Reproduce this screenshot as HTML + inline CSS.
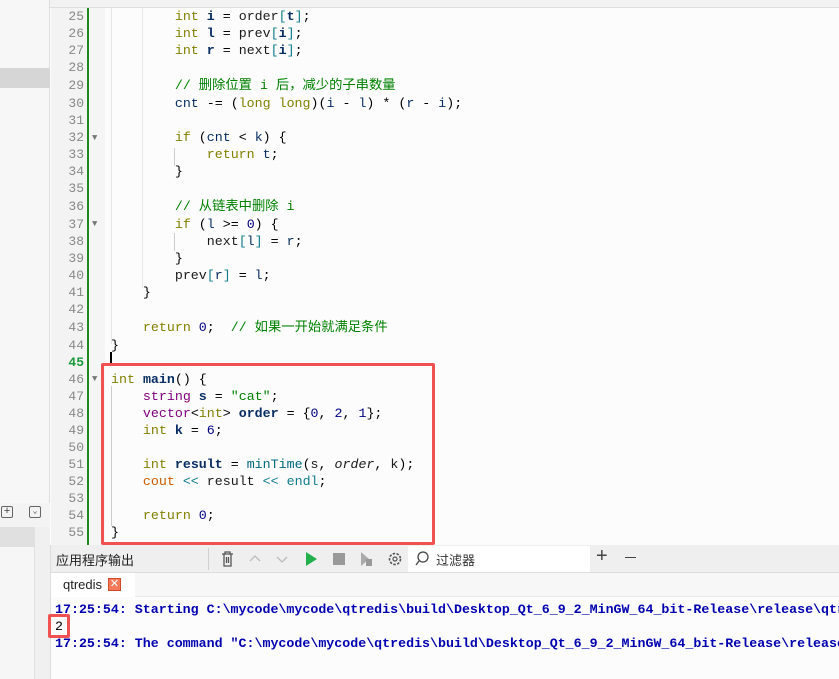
<!DOCTYPE html>
<html><head><meta charset="utf-8"><style>
*{margin:0;padding:0;box-sizing:border-box}
html,body{width:839px;height:679px;overflow:hidden}
body{background:#fcfcfc;position:relative;font-family:"Liberation Mono","Noto Sans CJK SC",monospace}
.abs{position:absolute}
#code{position:absolute;left:0;top:8px;width:839px;overflow:hidden}
.l{display:flex;height:17px;line-height:17px;font-size:13.3px;white-space:pre}
.l.c{height:19px;line-height:19px}
.n{width:84px;text-align:right;color:#888;padding-right:0;font-size:13px}
.t{position:absolute;left:111px}
.k{color:#808000}.v{color:#092e64;font-weight:bold}.p{color:#00677c}.num{color:#000080}.cm{color:#008000;font-family:"Liberation Mono","Noto Sans CJK SC",monospace}.s{color:#008000}.ty{color:#800080}.o{color:#ce5c00}.b{color:#1a1a1a}.br{color:#0f7c8c}
.ui{font-family:"Liberation Sans","Noto Sans CJK SC",sans-serif;font-size:13px;color:#222}
.out{left:55px;width:784px;overflow:hidden;font-size:13.3px;font-weight:bold;color:#0000b0;white-space:pre}
</style></head><body>
<div class="abs" style="left:0;top:0;width:839px;height:8px;background:#f2f2f2;border-bottom:1px solid #ddd"></div>
<div class="abs" style="left:0;top:0;width:50px;height:545px;background:#f7f7f7;border-right:1px solid #ddd"></div>
<div class="abs" style="left:0;top:68px;width:50px;height:20px;background:#d6d6d6"></div>
<div class="abs" style="left:51px;top:8px;width:37px;height:537px;background:#f3f3f3"></div>
<div class="abs" style="left:87px;top:8px;width:2px;height:537px;background:#1e8a1e"></div>
<div class="abs" style="left:89px;top:8px;width:16px;height:537px;background:#f5f5f5"></div>
<div class="abs" style="left:111px;top:8px;width:1px;height:336px;background:#e4e4e4"></div>
<div class="abs" style="left:142px;top:8px;width:1px;height:280px;background:#e8e8e8"></div>
<div class="abs" style="left:174px;top:148px;width:1px;height:18px;background:#ccc"></div>
<div class="abs" style="left:174px;top:233px;width:1px;height:18px;background:#ccc"></div>
<div class="abs" style="left:110px;top:352px;width:2px;height:14px;background:#000"></div>
<div class="abs" style="left:111px;top:386px;width:1px;height:140px;background:#ccc"></div>
<div class="abs" style="left:92px;top:133px;color:#777;font-size:9px">▼</div>
<div class="abs" style="left:92px;top:219px;color:#777;font-size:9px">▼</div>
<div class="abs" style="left:92px;top:374px;color:#777;font-size:9px">▼</div>
<div id="code">
<div class="l"><span class="n">25</span><span class="t">        <span class="k">int</span> <span class="v">i</span> = <span class="b">order</span><span class="br">[</span><span class="v">t</span><span class="br">]</span>;</span></div>
<div class="l"><span class="n">26</span><span class="t">        <span class="k">int</span> <span class="v">l</span> = <span class="b">prev</span><span class="br">[</span><span class="v">i</span><span class="br">]</span>;</span></div>
<div class="l"><span class="n">27</span><span class="t">        <span class="k">int</span> <span class="v">r</span> = <span class="b">next</span><span class="br">[</span><span class="v">i</span><span class="br">]</span>;</span></div>
<div class="l"><span class="n">28</span></div>
<div class="l c"><span class="n">29</span><span class="t cm">        // 删除位置 i 后，减少的子串数量</span></div>
<div class="l"><span class="n">30</span><span class="t">        <span class="v" style="font-weight:normal">cnt</span> -= (<span class="k">long long</span>)(<span class="v" style="font-weight:normal">i</span> - <span class="v" style="font-weight:normal">l</span>) * (<span class="v" style="font-weight:normal">r</span> - <span class="v" style="font-weight:normal">i</span>);</span></div>
<div class="l"><span class="n">31</span></div>
<div class="l"><span class="n">32</span><span class="t">        <span class="k">if</span> (<span class="v" style="font-weight:normal">cnt</span> &lt; <span class="v" style="font-weight:normal">k</span>) {</span></div>
<div class="l"><span class="n">33</span><span class="t">            <span class="k">return</span> <span class="v" style="font-weight:normal">t</span>;</span></div>
<div class="l"><span class="n">34</span><span class="t">        }</span></div>
<div class="l"><span class="n">35</span></div>
<div class="l c"><span class="n">36</span><span class="t cm">        // 从链表中删除 i</span></div>
<div class="l"><span class="n">37</span><span class="t">        <span class="k">if</span> (<span class="v" style="font-weight:normal">l</span> &gt;= <span class="num">0</span>) {</span></div>
<div class="l"><span class="n">38</span><span class="t">            <span class="b">next</span><span class="br">[</span><span class="v" style="font-weight:normal">l</span><span class="br">]</span> = <span class="v" style="font-weight:normal">r</span>;</span></div>
<div class="l"><span class="n">39</span><span class="t">        }</span></div>
<div class="l"><span class="n">40</span><span class="t">        <span class="b">prev</span><span class="br">[</span><span class="v" style="font-weight:normal">r</span><span class="br">]</span> = <span class="v" style="font-weight:normal">l</span>;</span></div>
<div class="l"><span class="n">41</span><span class="t">    }</span></div>
<div class="l"><span class="n">42</span></div>
<div class="l c"><span class="n">43</span><span class="t">    <span class="k">return</span> <span class="num">0</span>;  <span class="cm">// 如果一开始就满足条件</span></span></div>
<div class="l"><span class="n">44</span><span class="t">}</span></div>
<div class="l"><span class="n" style="color:#1a9a3a;font-weight:bold">45</span></div>
<div class="l"><span class="n">46</span><span class="t"><span class="k">int</span> <span class="v">main</span>() {</span></div>
<div class="l"><span class="n">47</span><span class="t">    <span class="ty">string</span> <span class="v">s</span> = <span class="s">"cat"</span>;</span></div>
<div class="l"><span class="n">48</span><span class="t">    <span class="ty">vector</span>&lt;<span class="k">int</span>&gt; <span class="v">order</span> = {<span class="num">0</span>, <span class="num">2</span>, <span class="num">1</span>};</span></div>
<div class="l"><span class="n">49</span><span class="t">    <span class="k">int</span> <span class="v">k</span> = <span class="num">6</span>;</span></div>
<div class="l"><span class="n">50</span></div>
<div class="l"><span class="n">51</span><span class="t">    <span class="k">int</span> <span class="v">result</span> = <span class="p">minTime</span>(<span class="b">s</span>, <i class="b">order</i>, <span class="b">k</span>);</span></div>
<div class="l"><span class="n">52</span><span class="t">    <span class="o">cout</span> <span class="br">&lt;&lt;</span> <span class="b">result</span> <span class="br">&lt;&lt;</span> <span class="br">endl</span>;</span></div>
<div class="l"><span class="n">53</span></div>
<div class="l"><span class="n">54</span><span class="t">    <span class="k">return</span> <span class="num">0</span>;</span></div>
<div class="l"><span class="n">55</span><span class="t">}</span></div>
</div>
<div class="abs" style="left:101px;top:363px;width:334px;height:182px;border:3px solid #f05252;border-radius:2px"></div>
<div class="abs" style="left:0;top:503px;width:50px;height:24px;background:#f3f3f3"></div>
<div class="abs" style="left:1px;top:506px;width:12px;height:12px;border:1px solid #666;border-radius:2px;font-size:11px;line-height:10px;text-align:center;color:#444">+</div>
<div class="abs" style="left:29px;top:506px;width:12px;height:12px;border:1px solid #666;border-radius:2px;font-size:8px;line-height:10px;text-align:center;color:#444">⌄</div>
<div class="abs" style="left:0;top:527px;width:50px;height:152px;background:#f6f6f6"></div>
<div class="abs" style="left:0;top:527px;width:34px;height:20px;background:#e0e0e0"></div>
<div class="abs" style="left:34px;top:527px;width:16px;height:152px;background:#f0f0f0;border-left:1px solid #e0e0e0"></div>
<div class="abs" style="left:50px;top:545px;width:789px;height:134px;background:#fcfcfc;border-left:1px solid #ddd"></div>
<div class="abs" style="left:51px;top:545px;width:788px;height:28px;background:#efefef;border-bottom:1px solid #ddd"></div>
<div class="abs ui" style="left:56px;top:550px">应用程序输出</div>
<div class="abs" style="left:208px;top:548px;width:1px;height:22px;background:#d0d0d0"></div>
<svg class="abs" style="left:218px;top:549px" width="200" height="20">
<g fill="none" stroke="#555" stroke-width="1.3"><path d="M4 5h11M7 5V3h5v2M6 5v12h7V5M8.5 8v6M10.5 8v6"/></g>
<g fill="none" stroke="#bbb" stroke-width="1.3"><path d="M32 12l5-5 5 5M59 8l5 5 5-5"/></g>
<path d="M88 3l11 7-11 7z" fill="#21b04b"/>
<rect x="115" y="4" width="12" height="12" fill="#999"/>
<path d="M143 3l8 7-8 7z" fill="#aaa"/><rect x="148" y="10" width="6" height="7" fill="#999"/>
<circle cx="177" cy="10" r="5.5" fill="none" stroke="#555" stroke-width="1.6" stroke-dasharray="2.5 1.4"/><circle cx="177" cy="10" r="2" fill="none" stroke="#555" stroke-width="1.2"/>
</svg>
<div class="abs" style="left:408px;top:546px;width:182px;height:26px;background:#fff"></div>
<svg class="abs" style="left:414px;top:550px" width="18" height="18"><circle cx="9" cy="7" r="5" fill="none" stroke="#444" stroke-width="1.3"/><path d="M5 11l-3 4" stroke="#444" stroke-width="1.3"/></svg>
<div class="abs ui" style="left:436px;top:550px;color:#333">过滤器</div>
<div class="abs ui" style="left:596px;top:545px;font-size:20px;color:#444">+</div>
<div class="abs" style="left:625px;top:557px;width:11px;height:1px;background:#444"></div>
<div class="abs" style="left:51px;top:573px;width:788px;height:24px;background:#f7f7f7;border-bottom:1px solid #e8e8e8"></div>
<div class="abs" style="left:51px;top:573px;width:84px;height:24px;background:#fff"></div>
<div class="abs ui" style="left:63px;top:577px;font-size:13px">qtredis</div>
<div class="abs" style="left:108px;top:578px;width:13px;height:13px;background:#f47a5a;border:1px solid #d24a2a;color:#fff;font-size:11px;line-height:11px;text-align:center;font-family:'Liberation Sans',sans-serif">✕</div>
<div class="abs out" style="top:602px">17:25:54: Starting C:\mycode\mycode\qtredis\build\Desktop_Qt_6_9_2_MinGW_64_bit-Release\release\qtredis.exe...</div>
<div class="abs" style="left:55px;top:619px;font-size:13.3px;color:#000">2</div>
<div class="abs" style="left:48px;top:614px;width:22px;height:24px;border:3px solid #f05252;border-radius:2px"></div>
<div class="abs out" style="top:636px">17:25:54: The command "C:\mycode\mycode\qtredis\build\Desktop_Qt_6_9_2_MinGW_64_bit-Release\release\qtredis.exe" finished.</div>
</body></html>
